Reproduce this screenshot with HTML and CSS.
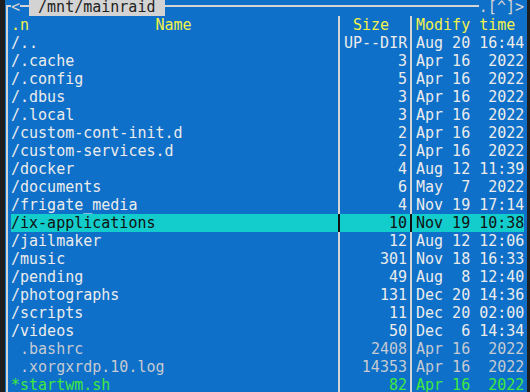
FILE: index.html
```html
<!DOCTYPE html>
<html lang="en">
<head>
    <meta charset="UTF-8">
    <title>mc - /mnt/mainraid</title>
    <link rel="stylesheet" href="styles.css">
</head>
<body>
    <div class="panel">
        <div class="top">
            <span class="corner"></span>
            <span class="glyph">&lt;</span>
            <span class="line short"></span>
            <span class="title"> /mnt/mainraid </span>
            <span class="line"></span>
            <span class="glyph">.[^]&gt;</span>
        </div>
        <div class="list">
            <div class="row head">
                <span class="name">.n              Name</span>
                <span class="sep"></span>
                <span class="size"> Size</span>
                <span class="sep"></span>
                <span class="date">Modify time</span>
            </div>
            <div class="row dir"><span class="name">/..</span><span class="sep"></span><span class="size">UP--DIR</span><span class="sep"></span><span class="date">Aug 20 16:44</span></div>
            <div class="row dir"><span class="name">/.cache</span><span class="sep"></span><span class="size">3</span><span class="sep"></span><span class="date">Apr 16  2022</span></div>
            <div class="row dir"><span class="name">/.config</span><span class="sep"></span><span class="size">5</span><span class="sep"></span><span class="date">Apr 16  2022</span></div>
            <div class="row dir"><span class="name">/.dbus</span><span class="sep"></span><span class="size">3</span><span class="sep"></span><span class="date">Apr 16  2022</span></div>
            <div class="row dir"><span class="name">/.local</span><span class="sep"></span><span class="size">3</span><span class="sep"></span><span class="date">Apr 16  2022</span></div>
            <div class="row dir"><span class="name">/custom-cont-init.d</span><span class="sep"></span><span class="size">2</span><span class="sep"></span><span class="date">Apr 16  2022</span></div>
            <div class="row dir"><span class="name">/custom-services.d</span><span class="sep"></span><span class="size">2</span><span class="sep"></span><span class="date">Apr 16  2022</span></div>
            <div class="row dir"><span class="name">/docker</span><span class="sep"></span><span class="size">4</span><span class="sep"></span><span class="date">Aug 12 11:39</span></div>
            <div class="row dir"><span class="name">/documents</span><span class="sep"></span><span class="size">6</span><span class="sep"></span><span class="date">May  7  2022</span></div>
            <div class="row dir"><span class="name">/frigate_media</span><span class="sep"></span><span class="size">4</span><span class="sep"></span><span class="date">Nov 19 17:14</span></div>
            <div class="row dir selected"><span class="name">/ix-applications</span><span class="sep"></span><span class="size">10</span><span class="sep"></span><span class="date">Nov 19 10:38</span></div>
            <div class="row dir"><span class="name">/jailmaker</span><span class="sep"></span><span class="size">12</span><span class="sep"></span><span class="date">Aug 12 12:06</span></div>
            <div class="row dir"><span class="name">/music</span><span class="sep"></span><span class="size">301</span><span class="sep"></span><span class="date">Nov 18 16:33</span></div>
            <div class="row dir"><span class="name">/pending</span><span class="sep"></span><span class="size">49</span><span class="sep"></span><span class="date">Aug  8 12:40</span></div>
            <div class="row dir"><span class="name">/photographs</span><span class="sep"></span><span class="size">131</span><span class="sep"></span><span class="date">Dec 20 14:36</span></div>
            <div class="row dir"><span class="name">/scripts</span><span class="sep"></span><span class="size">11</span><span class="sep"></span><span class="date">Dec 20 02:00</span></div>
            <div class="row dir"><span class="name">/videos</span><span class="sep"></span><span class="size">50</span><span class="sep"></span><span class="date">Dec  6 14:34</span></div>
            <div class="row file"><span class="name"> .bashrc</span><span class="sep"></span><span class="size">2408</span><span class="sep"></span><span class="date">Apr 16  2022</span></div>
            <div class="row file"><span class="name"> .xorgxrdp.10.log</span><span class="sep"></span><span class="size">14353</span><span class="sep"></span><span class="date">Apr 16  2022</span></div>
            <div class="row exec"><span class="name">*startwm.sh</span><span class="sep"></span><span class="size">82</span><span class="sep"></span><span class="date">Apr 16  2022</span></div>
        </div>
    </div>
</body>
</html>
```

FILE: styles.css
```css
body {
    margin: 0;
    background-color: #1e1e1e;
    font-family: "DejaVu Sans Mono", "Liberation Mono", monospace;
    font-size: 15px;
    line-height: 18px;
    overflow: hidden;
    height: 392px;
}
.panel {
    margin-left: 5px;
    width: 522px;
    background-color: #0e70c8;
    color: #ececec;
}
.top {
    display: flex;
    height: 16px;
    line-height: 14px;
    padding-right: 3px;
    white-space: pre;
    color: #d4d4d4;
}
.corner {
    width: 3px;
    margin-left: 1px;
    margin-top: 5px;
    border-top: 2px solid #d4d4d4;
    border-left: 2px solid #d4d4d4;
}
.glyph {
    color: #d4d4d4;
}
.line {
    flex: 1;
    height: 2px;
    margin-top: 5px;
    background-color: #d4d4d4;
}
.line.short {
    flex: none;
    width: 9px;
}
.title {
    padding-bottom: 2px;
    background-color: #d3d3d3;
    color: #222;
}
.list {
    margin-left: 1px;
    padding-left: 3px;
    border-left: 2px solid #d4d4d4;
}
.row {
    display: flex;
    height: 18px;
    width: 513px;
    white-space: pre;
}
.name {
    width: 324px;
    overflow: hidden;
}
.sep {
    width: 9px;
    background: linear-gradient(to right, transparent 3px, #d4d4d4 3px, #d4d4d4 5px, transparent 5px);
}
.size {
    width: 63px;
    text-align: right;
}
.date {
    width: 108px;
}
.head {
    color: #f2f24a;
}
.head .size {
    text-align: left;
}
.file {
    color: #c6cad2;
}
.exec {
    color: #3ee83e;
}
.selected {
    background-color: #13cccc;
    color: #111;
}
.selected .sep {
    background: linear-gradient(to right, transparent 3px, #111 3px, #111 5px, transparent 5px);
}
```
